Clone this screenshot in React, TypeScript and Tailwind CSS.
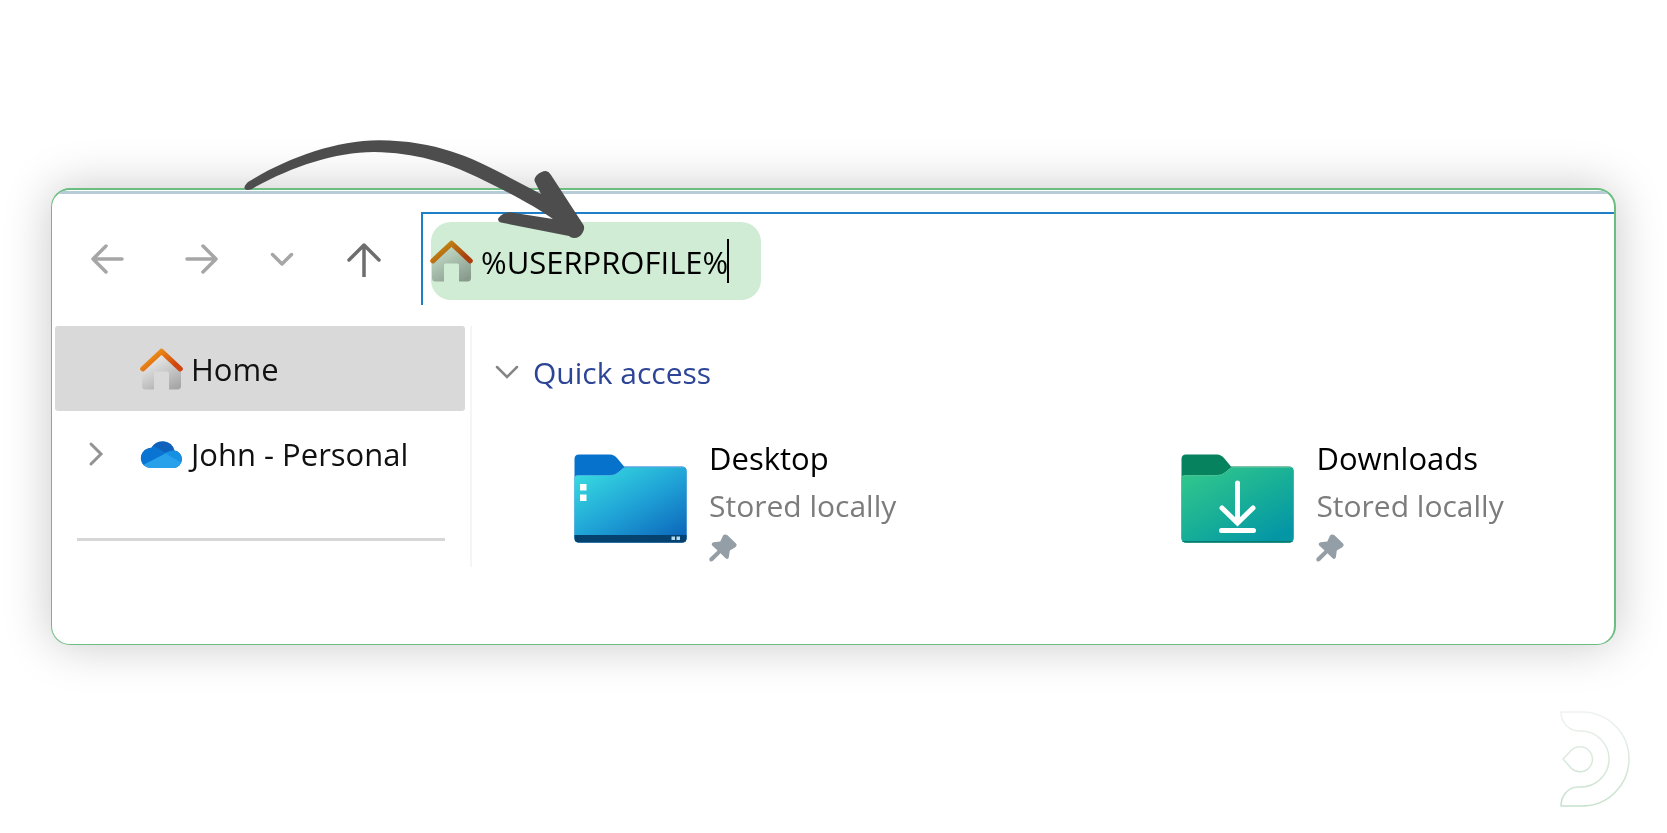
/**
 * App.tsx
 *
 * File explorer window with the address bar being edited. An arrow points
 * from outside the window to the typed path.
 */

import { useState } from 'react';
import type { ReactNode } from 'react';

interface IconProps {
	id: string;
}

function HomeIcon({ id }: IconProps) {
	return (
		<svg width="43" height="42" viewBox="0 0 43 42" className="shrink-0" aria-hidden="true">
			<defs>
				<linearGradient id={`${id}-wall`} x1="0.2" y1="0" x2="0.8" y2="1">
					<stop offset="0.2" stopColor="#e4e4e4" />
					<stop offset="1" stopColor="#a6a6a8" />
				</linearGradient>
				<linearGradient id={`${id}-roof`} x1="0" y1="0" x2="1" y2="0.6">
					<stop offset="0.2" stopColor="#ee9418" />
					<stop offset="1" stopColor="#cf4410" />
				</linearGradient>
			</defs>
			<path
				d="M21.500 5 L41 22 V38 Q41 41.500 37.500 41.500 H29 V25 Q29 23.500 27.500 23.500 H15.500 Q14 23.500 14 25 V41.500 H5.500 Q2 41.500 2 38 V22 Z"
				fill={`url(#${id}-wall)`}
			/>
			<path
				d="M2.800 20.800 L21.500 3.300 L40.200 20.800"
				fill="none"
				stroke={`url(#${id}-roof)`}
				strokeWidth="5.200"
				strokeLinecap="round"
				strokeLinejoin="round"
			/>
		</svg>
	);
}

function CloudIcon() {
	return (
		<svg width="43" height="28" viewBox="0 0 43 28" className="shrink-0" aria-hidden="true">
			<defs>
				<clipPath id="cloud-shape">
					<path d="M10.500 28 A9.900 9.900 0 0 1 8 8.600 Q9.500 8 11.500 7.800 A12.500 12.500 0 0 1 34.500 10.400 A8.900 8.900 0 0 1 34.200 28 Z" />
				</clipPath>
			</defs>
			<g clipPath="url(#cloud-shape)">
				<rect width="43" height="28" fill="#0f62bb" />
				<path d="M0 5 H11 Q16 6.500 20 9.500 L27 14 L16 20 L0 28 Z" fill="#0a74d2" />
				<path d="M24 13.500 Q32 8.500 43 11 V28 H30 Z" fill="#1690e2" />
				<path d="M3 25 L25.500 13.500 L42 23 V28 H3 Z" fill="#28a1ea" />
			</g>
		</svg>
	);
}

function PinIcon() {
	return (
		<svg width="28" height="28" viewBox="0 0 28 28" className="shrink-0" aria-hidden="true">
			<path
				d="M14.200 1.300 Q16.300 -0.500 18.500 1.300 L27 9.400 Q28.600 11.500 26.300 13.200 L20.800 16.600 L19.900 23 Q19 26.300 16.300 24 L11.500 19.300 L4 26.800 Q2.200 28.200 0.900 26.900 Q-0.400 25.500 1 23.800 L8.600 16.400 L3.200 11.600 Q1.700 9 4.600 8.300 L11.300 7.400 Z"
				fill="#949ea7"
			/>
		</svg>
	);
}

function DesktopFolder() {
	return (
		<svg width="113" height="89" viewBox="0 0 113 89" className="shrink-0" aria-hidden="true">
			<defs>
				<linearGradient id="desktop-front" x1="0.1" y1="0" x2="0.95" y2="1">
					<stop offset="0" stopColor="#38dce0" />
					<stop offset="0.5" stopColor="#1fa2d6" />
					<stop offset="1" stopColor="#0b62b8" />
				</linearGradient>
				<clipPath id="desktop-clip">
					<path d="M0.500 5 Q0.500 0.500 5 0.500 H36 Q40 0.500 43 4 L50 12.500 H108 Q112.500 12.500 112.500 17 V84 Q112.500 88.500 108 88.500 H5 Q0.500 88.500 0.500 84 Z" />
				</clipPath>
			</defs>
			<g clipPath="url(#desktop-clip)">
				<rect width="113" height="89" fill="#0672cb" />
				<path
					d="M0 26 Q0 21.500 4 21.500 H36 Q41 21.500 45 18 L49 14.500 Q50 13.500 52 13.500 H113 V89 H0 Z"
					fill="url(#desktop-front)"
				/>
				<path
					d="M0 26 Q0 21.500 4 21.500 H36 Q41 21.500 45 18 L49 14.500 Q50 13.500 52 13.500 H113"
					fill="none"
					stroke="#5cc4e6"
					strokeOpacity="0.6"
				/>
				<rect y="81" width="113" height="8" fill="#06426f" />
			</g>
			<path d="M6 30 h6.500 v6.500 h-6.500 z M6 40.500 h6.500 v6.500 h-6.500 z" fill="#fff" />
			<path d="M97.500 82.500 h3.500 v3.500 h-3.500 z M102.500 82.500 h3.500 v3.500 h-3.500 z" fill="#b4dcf0" />
		</svg>
	);
}

function DownloadsFolder() {
	return (
		<svg width="113" height="89" viewBox="0 0 113 89" className="shrink-0" aria-hidden="true">
			<defs>
				<linearGradient id="downloads-front" x1="0.1" y1="0" x2="0.95" y2="1">
					<stop offset="0" stopColor="#33c78c" />
					<stop offset="0.5" stopColor="#17ae98" />
					<stop offset="0.9" stopColor="#0596a6" />
				</linearGradient>
				<clipPath id="downloads-clip">
					<path d="M0.500 5 Q0.500 0.500 5 0.500 H36 Q40 0.500 43 4 L50 12.500 H108 Q112.500 12.500 112.500 17 V84 Q112.500 88.500 108 88.500 H5 Q0.500 88.500 0.500 84 Z" />
				</clipPath>
			</defs>
			<g clipPath="url(#downloads-clip)">
				<rect width="113" height="89" fill="#07825e" />
				<path
					d="M0 26 Q0 21.500 4 21.500 H36 Q41 21.500 45 18 L49 14.500 Q50 13.500 52 13.500 H113 V89 H0 Z"
					fill="url(#downloads-front)"
				/>
				<path
					d="M0 26 Q0 21.500 4 21.500 H36 Q41 21.500 45 18 L49 14.500 Q50 13.500 52 13.500 H113"
					fill="none"
					stroke="#5fd0a4"
					strokeOpacity="0.7"
				/>
				<path d="M0 88 H113" stroke="#067a6c" strokeWidth="2" />
			</g>
			<path
				d="M56.500 29 V68 M41 54 L56.500 69 L72 54 M40.500 76.500 H72.500"
				fill="none"
				stroke="#fff"
				strokeWidth="5"
				strokeLinecap="round"
			/>
		</svg>
	);
}

/** Hand-drawn arrow that runs from the top edge of the window to the path */
function PointerArrow() {
	return (
		<svg
			width="342"
			height="100"
			viewBox="244 138 342 100"
			className="pointer-events-none absolute -top-[51px] left-[192px]"
			aria-hidden="true"
		>
			<path
				d="M245 188 Q243 186 248 181 C285 158 335 139.300 379 139.300 C436 139.600 472 157 503 173 L541 193 L535 181 Q533.500 178 536.500 174.500 Q541 170 546 170 Q549 170.500 551 174 L583.500 224 Q585 227 583 231 Q580 237 574 237 Q571 237 569 235 L501 221.500 Q497 220.500 498.500 217 Q503 211.500 510 211.300 L553 218 C535 205 500 187 477 176 C448 162 415 151.500 374 151 C335 151 292 166 256 185.500 Q248 191 245 188 Z"
				fill="#4d4d4d"
			/>
		</svg>
	);
}

function BrandMark() {
	return (
		<svg width="70" height="98" viewBox="0 0 70 98" aria-hidden="true">
			<defs>
				<linearGradient id="brand" x1="0" y1="0" x2="0" y2="98" gradientUnits="userSpaceOnUse">
					<stop offset="0" stopColor="#eff3ef" />
					<stop offset="1" stopColor="#c4e0cb" />
				</linearGradient>
			</defs>
			<g fill="none" stroke="url(#brand)" strokeWidth="1.500" strokeLinejoin="round">
				<path d="M1 2 H22 A46.900 46.900 0 0 1 22 96 H1 C1 86 8 77 18 77 H21 A28 28 0 0 0 21 21 H18 C8 20 1 12 1 2 Z" />
				<path d="M3 49 L11.500 40 A12.500 12.500 0 1 1 11.500 58.500 Z" />
			</g>
		</svg>
	);
}

interface NavButtonProps {
	label: string;
	className: string;
	children: ReactNode;
}

function NavButton({ label, className, children }: NavButtonProps) {
	return (
		<button type="button" aria-label={label} className={className}>
			<svg
				width="36"
				height="36"
				viewBox="0 0 36 36"
				fill="none"
				stroke="currentColor"
				strokeWidth="3.500"
				strokeLinecap="round"
				strokeLinejoin="round"
			>
				{children}
			</svg>
		</button>
	);
}

interface FolderItemProps {
	name: string;
	icon: ReactNode;
}

function FolderItem({ name, icon }: FolderItemProps) {
	return (
		<a href="#" className="flex items-start">
			<span className="mt-5">{icon}</span>
			<span className="ml-[22px] flex flex-col whitespace-nowrap">
				<span className="text-black">{name}</span>
				<span className="mb-1 text-[30px] text-[#7c7c7c]">Stored locally</span>
				<PinIcon />
			</span>
		</a>
	);
}

export default function App() {
	const [path, setPath] = useState('%USERPROFILE%');

	return (
		<div className="min-h-screen bg-white px-[51px] pt-[188px] font-['Open_Sans','Noto_Sans',sans-serif] text-[31px] leading-[48px] text-[#111]">
			<main className="relative rounded-[19px] border border-t-2 border-r-2 border-[#6cbd80] bg-white pb-[77px] shadow-[0_0_48px_rgba(0,0,0,0.22)]">
				<div className="overflow-hidden rounded-t-[17px]">
					<div className="mt-px h-[3px] bg-[#b8ccd8]" />

					{/* Toolbar */}
					<header className="mt-[18px] flex h-[93px]">
						<nav className="flex w-[369px] shrink-0 items-center pl-[37px]" aria-label="History">
							<NavButton label="Back" className="text-[#a6a6a6]">
								<path d="M33 18 H4 M17 5 L4 18 L17 31" />
							</NavButton>
							<NavButton label="Forward" className="ml-[59px] text-[#a6a6a6]">
								<path d="M3 18 H32 M19 5 L32 18 L19 31" />
							</NavButton>
							<NavButton label="Recent locations" className="ml-[44px] text-[#a6a6a6]">
								<path d="M8.500 13.500 L18 23 L27.500 13.500" />
							</NavButton>
							<NavButton label="Up" className="ml-[46px] text-[#6e6e6e]">
								<path d="M18 36 V4 M3 19 L18 4 L33 19" />
							</NavButton>
						</nav>
						<div className="flex-1 border-t-2 border-l-2 border-[#1e7fc8] pt-2 pl-2">
							<label className="flex h-[78px] w-[330px] items-center rounded-[20px] bg-[#d0ecd5]">
								<span className="-ml-px flex mix-blend-multiply">
									<HomeIcon id="address" />
								</span>
								<input
									type="text"
									aria-label="Address"
									value={path}
									onChange={(e) => setPath(e.target.value)}
									className="ml-2 field-sizing-content bg-transparent pt-0.5 text-black outline-none"
								/>
								<span className="-ml-px h-[44px] w-[2px] bg-black" />
							</label>
						</div>
					</header>
				</div>

				<div className="mt-[21px] flex">
					{/* Sidebar */}
					<aside className="flex w-[420px] shrink-0 flex-col border-r-2 border-[#f5f5f5] pr-[5px] pl-[3px]">
						<a
							href="#"
							className="flex h-[85px] items-center gap-2 rounded-[3px] bg-[#d9d9d9] pl-[85px]"
						>
							<HomeIcon id="sidebar" />
							<span>Home</span>
						</a>
						<div className="flex h-[85px] items-center">
							<button type="button" aria-label="Expand" className="ml-[32px] text-[#939393]">
								<svg width="18" height="28" viewBox="0 0 18 28" fill="none">
									<path
										d="M4 4 L14 14 L4 24"
										stroke="currentColor"
										strokeWidth="3"
										strokeLinecap="round"
									/>
								</svg>
							</button>
							<a href="#" className="ml-[35px] flex items-center gap-2 whitespace-nowrap">
								<CloudIcon />
								<span>John - Personal</span>
							</a>
						</div>
						<hr className="mt-[42px] mr-5 mb-[26px] ml-[22px] h-[3px] border-0 bg-[#d6d6d6]" />
					</aside>

					{/* Content */}
					<section className="flex-1 pt-[23px] pl-[21px]">
						<button type="button" className="flex items-center text-[30px] text-[#2d4596]">
							<svg width="28" height="18" viewBox="0 0 28 18" fill="none">
								<path
									d="M4 3 L14 13 L24 3"
									stroke="#858585"
									strokeWidth="2.500"
									strokeLinecap="round"
								/>
							</svg>
							<span className="ml-[12px]">Quick access</span>
						</button>
						<div className="mt-[37px] grid grid-cols-[608fr_433fr] pl-[81px]">
							<FolderItem name="Desktop" icon={<DesktopFolder />} />
							<FolderItem name="Downloads" icon={<DownloadsFolder />} />
						</div>
					</section>
				</div>

				<PointerArrow />
			</main>
			<footer className="mt-[65px] -mr-[14px] flex justify-end">
				<BrandMark />
			</footer>
		</div>
	);
}
